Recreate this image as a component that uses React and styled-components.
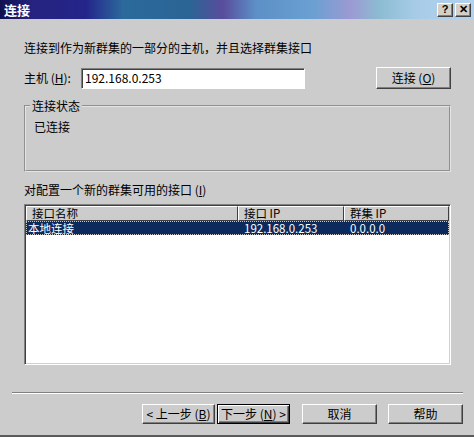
import React from "react";
import styled, { createGlobalStyle } from "styled-components";

const GlobalStyle = createGlobalStyle`
  body {
    margin: 0;
    background: #cccccc;
  }
`;

const Window = styled.div`
  width: 474px;
  height: 437px;
  box-sizing: border-box;
  background: #cccccc;
  border-bottom: 2px solid #5a5a5a;
  display: flex;
  flex-direction: column;
  font-family: "Noto Sans CJK SC", "Liberation Sans", sans-serif;
  font-size: 12px;
  line-height: 14px;
  color: #000;
`;

const TitleBar = styled.div`
  height: 19px;
  flex-shrink: 0;
  display: flex;
  align-items: center;
  padding: 0 3px 0 4px;
  background: linear-gradient(
    90deg,
    #101050 0%,
    #262480 7%,
    #24248a 18%,
    #2c6a9c 26%,
    #2a6494 40%,
    #5a4c9c 47%,
    #5c90c6 54%,
    #6aa0d2 66%,
    #9c9ad2 74%,
    #8cbcd2 80%,
    #a8cce8 88%,
    #b2d2ee 100%
  );
`;

const Title = styled.span`
  color: #fff;
  font-weight: bold;
  font-size: 13px;
`;

const CaptionButtons = styled.div`
  margin-left: auto;
  display: flex;
  gap: 2px;
`;

const CaptionButton = styled.div`
  width: 16px;
  height: 14px;
  box-sizing: border-box;
  background: #d4d0c8;
  border: 1px solid;
  border-color: #fff #404040 #404040 #fff;
  box-shadow: inset -1px -1px #808080;
  display: flex;
  align-items: center;
  justify-content: center;
  font-family: "Liberation Sans", sans-serif;
  font-weight: bold;
  font-size: 11px;
  line-height: 1;
`;

const Content = styled.div`
  padding: 22px 23px 0 24px;
  display: flex;
  flex-direction: column;
`;

const Intro = styled.div``;

const HostRow = styled.div`
  margin-top: 12px;
  height: 22px;
  display: flex;
  align-items: center;
`;

const HostLabel = styled.span`
  width: 57px;
`;

const TextInput = styled.div`
  width: 224px;
  height: 21px;
  box-sizing: border-box;
  background: #fff;
  border: 1px solid;
  border-color: #808080 #fff #fff #808080;
  box-shadow: inset 1px 1px #404040;
  padding: 0 3px;
  display: flex;
  align-items: center;
`;

const Button = styled.div`
  width: ${(p) => p.w || 75}px;
  height: ${(p) => p.h || 20}px;
  box-sizing: border-box;
  background: #cccccc;
  display: flex;
  align-items: center;
  justify-content: center;
  white-space: nowrap;
  border: 1px solid;
  border-color: ${(p) => (p.primary ? "#000" : "#fff #404040 #404040 #fff")};
  box-shadow: ${(p) =>
    p.primary
      ? "inset 1px 1px #fff, inset -1px -1px #404040, inset -2px -2px #808080"
      : "inset -1px -1px #808080"};
`;

const ConnectButton = styled(Button)`
  margin-left: auto;
`;

const GroupBox = styled.fieldset`
  margin: 10px 0 0;
  padding: 7px 8px 0 4px;
  height: 73px;
  box-sizing: border-box;
  border: 2px groove #e4e4e4;
  min-width: 0;
`;

const GroupLegend = styled.legend`
  padding: 0 2px;
  margin-left: 0;
`;

const StatusText = styled.div`
  margin-left: 4px;
`;

const ListLabel = styled.div`
  margin-top: 11px;
`;

const ListBox = styled.div`
  margin-top: 7px;
  height: 161px;
  box-sizing: border-box;
  background: #fff;
  border: 1px solid;
  border-color: #808080 #fff #fff #808080;
  box-shadow: inset 1px 1px #404040, inset -1px -1px #d4d0c8;
  padding: 1px;
  font-size: 11.5px;
`;

const ListRow = styled.div`
  display: grid;
  grid-template-columns: 212px 106px 1fr;
  height: 15px;
`;

const HeaderCell = styled.div`
  box-sizing: border-box;
  height: 15px;
  background: #cccccc;
  border: 1px solid;
  border-color: #fff #404040 #404040 #fff;
  padding-left: 5px;
  line-height: 13px;
  white-space: nowrap;
  overflow: hidden;
`;

const SelectedRow = styled(ListRow)`
  height: 14px;
  background: #0c2a5c;
  color: #fff;
  outline: 1px dotted #c8c8c8;
  outline-offset: -1px;
`;

const Cell = styled.div`
  padding-left: ${(p) => (p.first ? 2 : 6)}px;
  line-height: 14px;
  white-space: nowrap;
  overflow: hidden;
`;

const Footer = styled.div`
  margin-top: 27px;
  padding: 0 11px 0 12px;
`;

const Separator = styled.div`
  height: 2px;
  border-top: 1px solid #808080;
  border-bottom: 1px solid #fff;
  box-sizing: border-box;
`;

const ButtonRow = styled.div`
  margin-top: 10px;
  display: flex;
  justify-content: flex-end;
`;

const ButtonGroup = styled.div`
  display: flex;
  gap: 2px;
  margin-right: 12px;
`;

const Spaced = styled.div`
  margin-left: ${(p) => p.gap || 0}px;
`;

export default function App() {
  return (
    <>
      <GlobalStyle />
      <Window>
        <TitleBar>
          <Title>连接</Title>
          <CaptionButtons>
            <CaptionButton>?</CaptionButton>
            <CaptionButton>✕</CaptionButton>
          </CaptionButtons>
        </TitleBar>
        <Content>
          <Intro>连接到作为新群集的一部分的主机，并且选择群集接口</Intro>
          <HostRow>
            <HostLabel>
              主机 (<u>H</u>):
            </HostLabel>
            <TextInput>192.168.0.253</TextInput>
            <ConnectButton w={75} h={22}>
              连接 (<u>O</u>)
            </ConnectButton>
          </HostRow>
          <GroupBox>
            <GroupLegend>连接状态</GroupLegend>
            <StatusText>已连接</StatusText>
          </GroupBox>
          <ListLabel>
            对配置一个新的群集可用的接口 (<u>I</u>)
          </ListLabel>
          <ListBox>
            <ListRow>
              <HeaderCell>接口名称</HeaderCell>
              <HeaderCell>接口 IP</HeaderCell>
              <HeaderCell>群集 IP</HeaderCell>
            </ListRow>
            <SelectedRow>
              <Cell first>本地连接</Cell>
              <Cell>192.168.0.253</Cell>
              <Cell>0.0.0.0</Cell>
            </SelectedRow>
          </ListBox>
        </Content>
        <Footer>
          <Separator />
          <ButtonRow>
            <ButtonGroup>
              <Button w={73}>
                &lt; 上一步 (<u>B</u>)
              </Button>
              <Button w={73} primary>
                下一步 (<u>N</u>) &gt;
              </Button>
            </ButtonGroup>
            <Button w={75}>取消</Button>
            <Spaced gap={11}>
              <Button w={75}>帮助</Button>
            </Spaced>
          </ButtonRow>
        </Footer>
      </Window>
    </>
  );
}
